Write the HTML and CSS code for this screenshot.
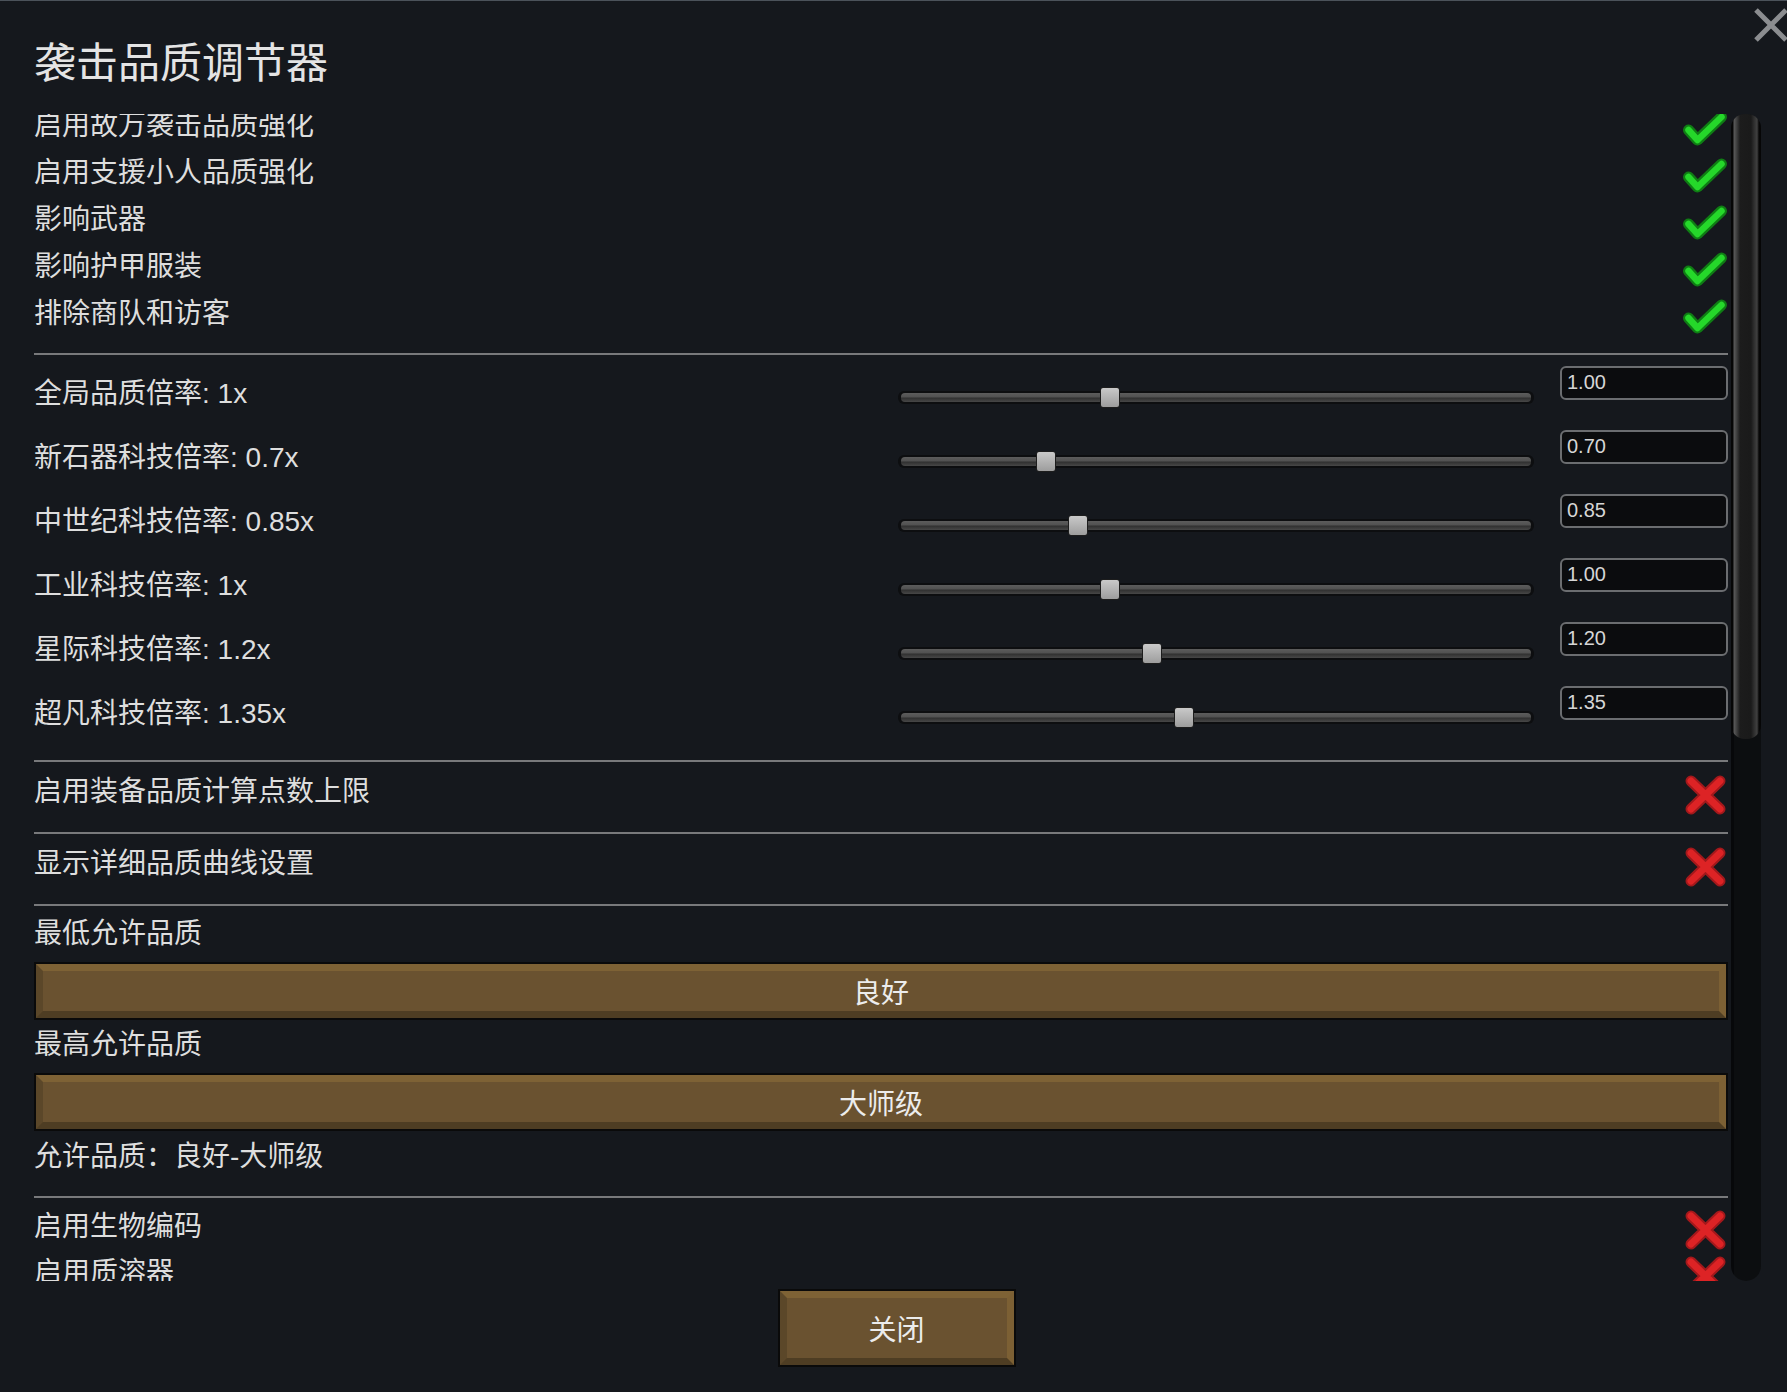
FILE: index.html
```html
<!DOCTYPE html>
<html lang="zh-CN">
<head>
<meta charset="utf-8">
<title>袭击品质调节器</title>
<link rel="stylesheet" href="styles.css">
</head>
<body>
<div class="window">
  <svg class="close-x" viewBox="0 0 36 36" aria-hidden="true">
    <path d="M3 3 L33 33 M33 3 L3 33" stroke="#8b8d90" stroke-width="5" fill="none"/>
  </svg>
  <h1 class="title">袭击品质调节器</h1>

  <div class="main">
    <div class="viewport">
      <div class="content">
        <div class="check-row"><span>启用故万袭击品质强化</span><svg class="icon-check" viewBox="0 0 44 40"><path class="ck-o" d="M5.5 21 L14.5 31 L38.5 8"/><path class="ck-i" d="M5.5 21 L14.5 31 L38.5 8"/></svg></div>
        <div class="check-row"><span>启用支援小人品质强化</span><svg class="icon-check" viewBox="0 0 44 40"><path class="ck-o" d="M5.5 21 L14.5 31 L38.5 8"/><path class="ck-i" d="M5.5 21 L14.5 31 L38.5 8"/></svg></div>
        <div class="check-row"><span>影响武器</span><svg class="icon-check" viewBox="0 0 44 40"><path class="ck-o" d="M5.5 21 L14.5 31 L38.5 8"/><path class="ck-i" d="M5.5 21 L14.5 31 L38.5 8"/></svg></div>
        <div class="check-row"><span>影响护甲服装</span><svg class="icon-check" viewBox="0 0 44 40"><path class="ck-o" d="M5.5 21 L14.5 31 L38.5 8"/><path class="ck-i" d="M5.5 21 L14.5 31 L38.5 8"/></svg></div>
        <div class="check-row"><span>排除商队和访客</span><svg class="icon-check" viewBox="0 0 44 40"><path class="ck-o" d="M5.5 21 L14.5 31 L38.5 8"/><path class="ck-i" d="M5.5 21 L14.5 31 L38.5 8"/></svg></div>

        <div class="sep sep-a"></div>

        <div class="slider-row">
          <span class="slider-label">全局品质倍率: 1x</span>
          <div class="slider"><div class="track"><div class="handle" style="left:33.33%"></div></div></div>
          <div class="numbox">1.00</div>
        </div>
        <div class="slider-row">
          <span class="slider-label">新石器科技倍率: 0.7x</span>
          <div class="slider"><div class="track"><div class="handle" style="left:23.33%"></div></div></div>
          <div class="numbox">0.70</div>
        </div>
        <div class="slider-row">
          <span class="slider-label">中世纪科技倍率: 0.85x</span>
          <div class="slider"><div class="track"><div class="handle" style="left:28.33%"></div></div></div>
          <div class="numbox">0.85</div>
        </div>
        <div class="slider-row">
          <span class="slider-label">工业科技倍率: 1x</span>
          <div class="slider"><div class="track"><div class="handle" style="left:33.33%"></div></div></div>
          <div class="numbox">1.00</div>
        </div>
        <div class="slider-row">
          <span class="slider-label">星际科技倍率: 1.2x</span>
          <div class="slider"><div class="track"><div class="handle" style="left:40%"></div></div></div>
          <div class="numbox">1.20</div>
        </div>
        <div class="slider-row">
          <span class="slider-label">超凡科技倍率: 1.35x</span>
          <div class="slider"><div class="track"><div class="handle" style="left:45%"></div></div></div>
          <div class="numbox">1.35</div>
        </div>

        <div class="sep sep-b"></div>

        <div class="toggle-row"><span>启用装备品质计算点数上限</span><svg class="icon-x" viewBox="0 0 43 42"><path class="x-o" d="M7 7 L36 35 M36 7 L7 35"/><path class="x-i" d="M7 7 L36 35 M36 7 L7 35"/></svg></div>
        <div class="sep"></div>
        <div class="toggle-row"><span>显示详细品质曲线设置</span><svg class="icon-x" viewBox="0 0 43 42"><path class="x-o" d="M7 7 L36 35 M36 7 L7 35"/><path class="x-i" d="M7 7 L36 35 M36 7 L7 35"/></svg></div>
        <div class="sep"></div>

        <div class="label label-1">最低允许品质</div>
        <div class="btn btn-wide">良好</div>
        <div class="label label-2">最高允许品质</div>
        <div class="btn btn-wide">大师级</div>
        <div class="label label-3">允许品质：良好-大师级</div>

        <div class="sep sep-c"></div>

        <div class="small-row first"><span>启用生物编码</span><svg class="icon-x" viewBox="0 0 43 42"><path class="x-o" d="M7 7 L36 35 M36 7 L7 35"/><path class="x-i" d="M7 7 L36 35 M36 7 L7 35"/></svg></div>
        <div class="small-row"><span>启用质溶器</span><svg class="icon-x" viewBox="0 0 43 42"><path class="x-o" d="M7 7 L36 35 M36 7 L7 35"/><path class="x-i" d="M7 7 L36 35 M36 7 L7 35"/></svg></div>
      </div>
    </div>
    <div class="scrollbar"><div class="thumb"></div></div>
  </div>

  <div class="footer">
    <div class="btn btn-close">关闭</div>
  </div>
</div>
</body>
</html>
```

FILE: styles.css
```css
* { box-sizing: border-box; }

html, body {
  margin: 0;
  padding: 0;
  background: #15181d;
}

body {
  width: 1787px;
  height: 1392px;
  overflow: hidden;
  font-family: "Liberation Sans", "Noto Sans CJK SC", sans-serif;
  color: #dedede;
}

.window {
  position: relative;
  width: 1787px;
  height: 1392px;
  border-top: 1px solid #4b525a;
  padding: 0 26px 0 34px;
}

.close-x {
  position: absolute;
  top: 6px;
  right: -2px;
  width: 36px;
  height: 36px;
}

.title {
  margin: 37px 0 0 0;
  font-size: 42px;
  line-height: 52px;
  font-weight: normal;
  color: #e4e4e4;
}

.main {
  margin-top: 24px;
  display: flex;
  gap: 3px;
  height: 1167px;
}

.viewport {
  flex: 1;
  overflow: hidden;
  height: 1167px;
}

.content {
  margin-top: -11px;
  font-size: 28px;
}

/* check rows */
.check-row {
  height: 47px;
  display: flex;
  align-items: center;
  justify-content: space-between;
  line-height: 36px;
}
.check-row:first-child { height: 46px; }

.icon-check {
  width: 44px;
  height: 40px;
  margin-top: 6px;
  margin-right: 1px;
  overflow: visible;
}

.ck-o, .ck-i {
  fill: none;
  stroke-linecap: round;
  stroke-linejoin: round;
}
.ck-o { stroke: #0f7d14; stroke-width: 11; }
.ck-i { stroke: #25d82a; stroke-width: 6.5; }

.icon-x {
  width: 43px;
  height: 42px;
  margin-right: 1px;
  overflow: visible;
}
.x-o, .x-i {
  fill: none;
  stroke-linecap: round;
}
.x-o { stroke: #a3181b; stroke-width: 11; }
.x-i { stroke: #dd2325; stroke-width: 7; }

/* separators */
.sep {
  height: 2px;
  background: #78797b;
}
.sep-a { margin-top: 16px; }
.sep-b { margin-top: 15px; }
.sep-c { margin-top: 21px; }

/* slider rows */
.slider-row {
  height: 64px;
  display: flex;
  align-items: flex-start;
}
.sep-a + .slider-row { margin-top: 6px; }

.slider-label {
  flex: 1;
  margin-top: 15px;
  line-height: 36px;
}

.slider {
  width: 636px;
  padding-top: 30px;
}

.track {
  position: relative;
  height: 13px;
  border-radius: 6px;
  background: #0d0e10;
  padding: 2px 3px;
}
.track::before {
  content: "";
  display: block;
  height: 9px;
  border-radius: 4px;
  background: linear-gradient(#5c5c5c 0, #515151 45%, #303030 55%, #474747 100%);
}

.handle {
  position: absolute;
  top: -4px;
  width: 20px;
  height: 21px;
  margin-left: -10px;
  border: 1px solid #1d1d1d;
  border-radius: 3px;
  background: linear-gradient(#c9c9c9, #9d9d9d);
}

.numbox {
  width: 168px;
  height: 34px;
  margin-top: 5px;
  margin-left: 26px;
  border: 2px solid #6b6d70;
  border-radius: 6px;
  background: #0b0c0e;
  font-size: 20px;
  line-height: 28px;
  padding-left: 5px;
  color: #d6d6d6;
}

/* toggle rows */
.toggle-row {
  height: 70px;
  padding-top: 12px;
  display: flex;
  align-items: flex-start;
  justify-content: space-between;
  line-height: 36px;
}

/* labels / dropdowns */
.label { line-height: 36px; }
.label-1 { margin-top: 10px; }
.label-2 { margin-top: 7px; }
.label-3 { margin-top: 8px; }

.btn {
  border: 2px solid #0a0a0a;
  background: #6a5230;
  display: flex;
  align-items: center;
  justify-content: center;
  color: #ececec;
  font-size: 28px;
  position: relative;
}
.btn::before {
  content: "";
  position: absolute;
  inset: 0;
  border-style: solid;
  border-width: 7px;
  border-color: #7e6235 #7c6034 #4e3d23 #5b4729;
  pointer-events: none;
}

.btn-wide {
  height: 58px;
  margin-top: 10px;
}

/* bottom rows */
.small-row {
  height: 46px;
  display: flex;
  align-items: center;
  justify-content: space-between;
  line-height: 36px;
}
.small-row.first { margin-top: 6px; }
.small-row .icon-x { margin-top: 6px; }

/* scrollbar */
.scrollbar {
  width: 30px;
  height: 1167px;
  border-radius: 15px;
  background: linear-gradient(90deg, #07080a 0, #07080a 3px, #0c0e10 3px, #0c0e10 100%);
}
.thumb {
  height: 625px;
  border-radius: 14px;
  background: linear-gradient(90deg,
    #060606 0, #060606 2px,
    #5a5a5a 3px, #3c3c3c 6px, #1c1c1c 9px,
    #1a1a1a 20px, #2e2e2e 23px, #404040 26px,
    #060606 28px, #060606 30px);
}

/* footer */
.footer {
  margin-top: 8px;
  display: flex;
  justify-content: center;
  margin-left: -34px;
  margin-right: -26px;
  padding-left: 6px;
}
.btn-close {
  width: 238px;
  height: 78px;
}
```
